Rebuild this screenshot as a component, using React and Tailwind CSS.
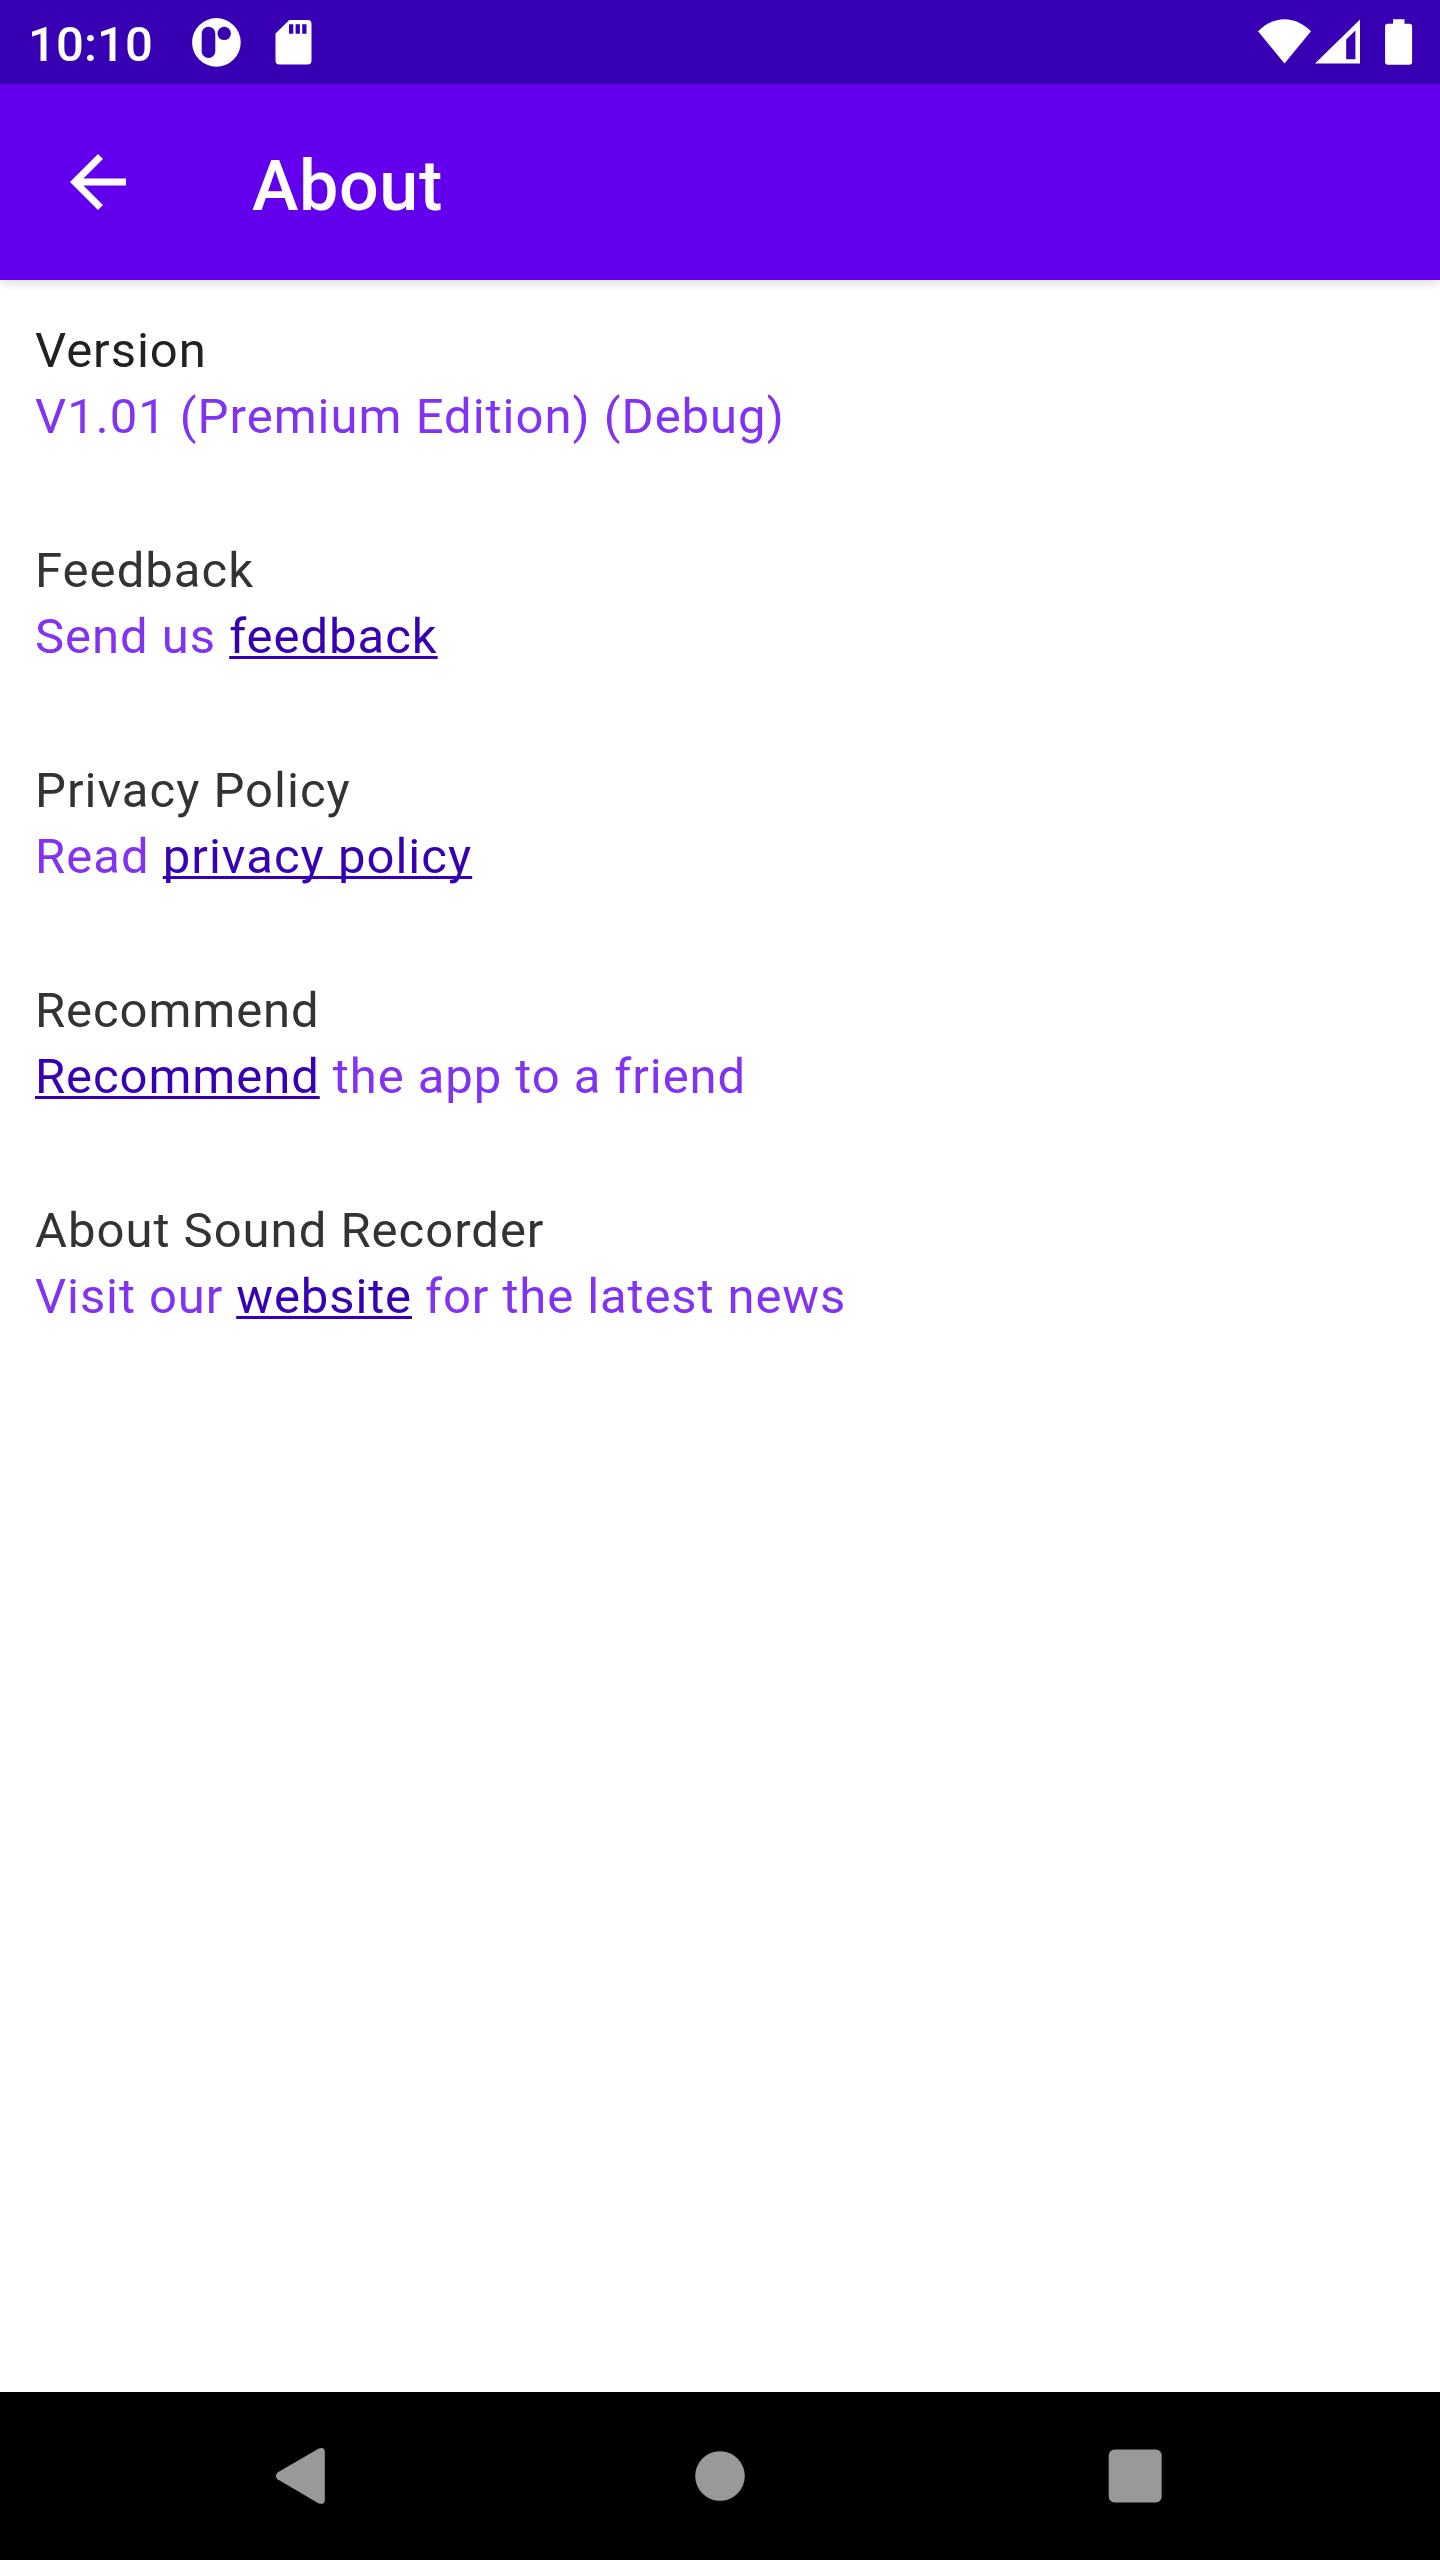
import React from "react";

const sections = [
  {
    title: "Version",
    titleStyle: "text-[#212121] tracking-[0.02em]",
    bodyStyle: "tracking-[0.0203em]",
    before: "V1.01 (Premium Edition) (Debug)",
  },
  {
    title: "Feedback",
    titleStyle: "text-[#333333] tracking-[0.021em]",
    bodyStyle: "tracking-[0.0198em]",
    before: "Send us ",
    link: "feedback",
  },
  {
    title: "Privacy Policy",
    titleStyle: "text-[#333333] tracking-[0.0205em]",
    bodyStyle: "tracking-[0.0208em]",
    before: "Read ",
    link: "privacy policy",
  },
  {
    title: "Recommend",
    titleStyle: "text-[#333333] tracking-[0.0185em]",
    bodyStyle: "tracking-[0.0189em]",
    link: "Recommend",
    after: " the app to a friend",
  },
  {
    title: "About Sound Recorder",
    titleStyle: "text-[#333333] tracking-[0.0202em]",
    bodyStyle: "tracking-[0.0183em]",
    before: "Visit our ",
    link: "website",
    after: " for the latest news",
  },
];

const StatusBar = () => (
  <div className="flex items-center justify-between h-[84px] bg-[#3700b3] text-white">
    <div className="flex items-center h-full pl-[28px]">
      <span className="w-[152px] text-[49px] leading-[84px] font-medium pt-[5px] tracking-[0.003em]">
        10:10
      </span>
      <svg className="w-[140px] h-[84px]" viewBox="180 0 140 84" fill="none">
        {/* app notification */}
        <circle cx="216.4" cy="42.4" r="24.3" fill="currentColor" />
        <rect x="201.7" y="26.7" width="13.6" height="31.4" rx="6.8" fill="#3700b3" />
        <circle cx="224.2" cy="33.4" r="6.7" fill="#3700b3" />
        {/* sd card */}
        <path
          d="M289.3 20H307.5a4 4 0 0 1 4 4V60.5a4 4 0 0 1-4 4H279.5a4 4 0 0 1-4-4V33.6z"
          fill="currentColor"
        />
        <path d="M289 24.3h4.3v9.4H289zM295.6 24.3h4.3v9.4h-4.3zM302.2 24.3h4.3v9.4h-4.3z" fill="#3700b3" />
      </svg>
    </div>
    <svg className="w-[190px] h-[84px]" viewBox="1250 0 190 84" fill="currentColor">
      {/* wifi */}
      <path d="M1284.5 63.4L1258 31.2C1265 24.5 1274 19.2 1284.5 19.2S1304 24.5 1311 31.2z" />
      {/* signal */}
      <path
        fillRule="evenodd"
        d="M1315 63.6L1360 19.4V63.6zM1346.2 39.4V59.2H1355.4V30.6z"
      />
      {/* battery */}
      <path d="M1393 19.3h11.5v4.5h5a2.6 2.6 0 0 1 2.6 2.6v35.7a2.6 2.6 0 0 1-2.6 2.6h-21.8a2.6 2.6 0 0 1-2.6-2.6V26.4a2.6 2.6 0 0 1 2.6-2.6h5.3z" />
    </svg>
  </div>
);

const AppBar = () => (
  <div className="relative flex items-center h-[196px] pl-[56px] bg-[#6200ee] text-white shadow-[0_5px_10px_-2px_rgba(0,0,0,0.15)]">
    <svg className="w-[84px] h-[84px]" viewBox="0 0 24 24" fill="currentColor">
      <path d="M20 11H7.83l5.59-5.59L12 4l-8 8 8 8 1.41-1.41L7.83 13H20v-2z" />
    </svg>
    <h1 className="ml-[112px] pt-[8px] text-[70px] leading-[82px] font-medium tracking-[0.009em]">
      About
    </h1>
  </div>
);

const Section = ({ title, titleStyle, bodyStyle, before, link, after }) => (
  <div>
    <div className={titleStyle}>{title}</div>
    <div className={`text-[#8133f1] ${bodyStyle}`}>
      {before}
      {link && (
        <a className="text-[#3700b3] underline decoration-[2.5px] underline-offset-[3px] [text-decoration-skip-ink:none]">
          {link}
        </a>
      )}
      {after}
    </div>
  </div>
);

const NavBar = () => (
  <div className="flex items-center justify-between h-[168px] px-[258px] bg-black text-[#999999]">
    <svg className="w-[84px] h-[84px]" viewBox="0 0 84 84" fill="currentColor">
      <path d="M19.5 38.4L60.8 14.4Q66.8 12.6 66.8 18V66Q66.8 71.2 60.8 69.4L19.5 45.2Q16.2 41.8 19.5 38.4z" />
    </svg>
    <svg className="w-[84px] h-[84px]" viewBox="0 0 84 84" fill="currentColor">
      <circle cx="42" cy="42" r="24.8" />
    </svg>
    <svg className="w-[84px] h-[84px]" viewBox="0 0 84 84" fill="currentColor">
      <rect x="10.7" y="15.4" width="53" height="53" rx="6" />
    </svg>
  </div>
);

const App = () => {
  return (
    <div className="flex flex-col w-[1440px] h-[2560px] overflow-hidden bg-white font-['Roboto',sans-serif]">
      <StatusBar />
      <AppBar />
      <main className="flex flex-col flex-1 gap-[88px] px-[35px] pt-[38px] text-[49px] leading-[66px] whitespace-pre">
        {sections.map((section) => (
          <Section key={section.title} {...section} />
        ))}
      </main>
      <NavBar />
    </div>
  );
};

export default App;
